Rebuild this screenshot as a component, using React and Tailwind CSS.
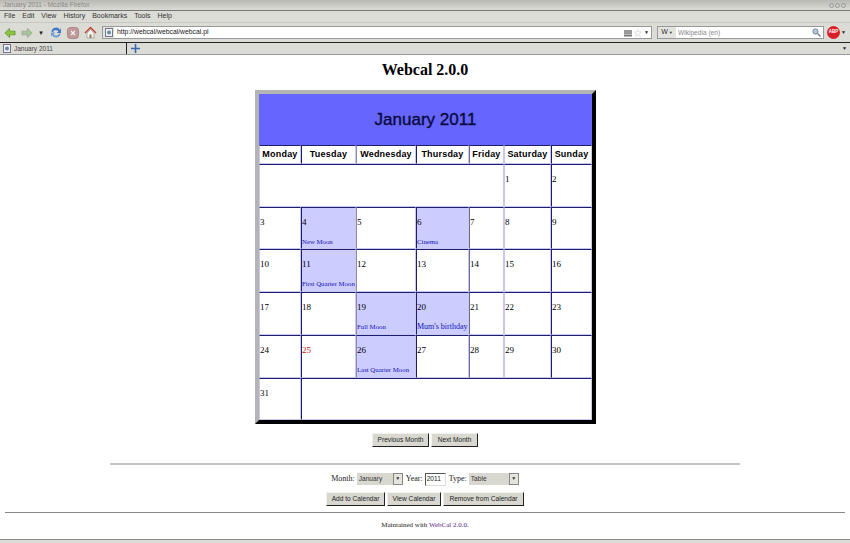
import React from 'react';

const SANS = "font-['Liberation_Sans',Arial,sans-serif]";
const SERIF = "font-['Liberation_Serif','Times_New_Roman',serif]";

const cols = [42, 55, 60, 53, 35, 47, 41];
const dayNames = ['Monday', 'Tuesday', 'Wednesday', 'Thursday', 'Friday', 'Saturday', 'Sunday'];
const rowHeights = ['h-[43px]', 'h-[42px]', 'h-[43px]', 'h-[43px]', 'h-[43px]', 'h-[42px]'];

// the vertical rules are not all the same strength in the screenshot
const leftBorders = [
  'border-l-[#c8c8ee]',
  'border-l-[#1c1c70]',
  'border-l-[#8c8cb8]',
  'border-l-[#1c1c70]',
  'border-l-[#6a6a9c]',
  'border-l-[#c8c8ee]',
  'border-l-[#1c1c70]',
];

const weeks = [
  [{ blank: 5 }, { n: 1 }, { n: 2 }],
  [{ n: 3 }, { n: 4, note: 'New Moon' }, { n: 5 }, { n: 6, note: 'Cinema' }, { n: 7 }, { n: 8 }, { n: 9 }],
  [{ n: 10 }, { n: 11, note: 'First Quarter Moon' }, { n: 12 }, { n: 13 }, { n: 14 }, { n: 15 }, { n: 16 }],
  [{ n: 17 }, { n: 18 }, { n: 19, note: 'Full Moon' }, { n: 20, note: "Mum's birthday", big: true }, { n: 21 }, { n: 22 }, { n: 23 }],
  [{ n: 24 }, { n: 25, red: true }, { n: 26, note: 'Last Quarter Moon' }, { n: 27 }, { n: 28 }, { n: 29 }, { n: 30 }],
  [{ n: 31 }, { blank: 6 }],
];

const cellBorder = 'border border-t-[#1c1c70] border-b-[#c8c8ee] border-r-[#c8c8ee]';

function DayCell({ cell, col }) {
  const left = leftBorders[col];
  if (cell.blank) {
    return <td colSpan={cell.blank} className={`${cellBorder} ${left} p-0`} />;
  }
  return (
    <td className={`${cellBorder} ${left} p-0 align-top ${cell.note ? 'bg-[#ccccff]' : 'bg-white'}`}>
      <div className="flex h-[40px] flex-col overflow-hidden">
        <span className={`mt-[9px] text-[9px] leading-[11px] ${cell.red ? 'text-[#cc1111]' : 'text-black'}`}>{cell.n}</span>
        {cell.note && (
          <span className={`mt-auto whitespace-nowrap pb-[1px] leading-[10px] text-[#1414b4] ${cell.big ? 'text-[8px]' : 'text-[6.8px]'}`}>
            {cell.note}
          </span>
        )}
      </div>
    </td>
  );
}

function PageButton({ children, width }) {
  return (
    <button
      className={`h-[14px] whitespace-nowrap border border-t-[#f0f0ec] border-l-[#f0f0ec] border-b-[#222] border-r-[#222] bg-[#d8d8d0] p-0 text-[6.6px] leading-none text-[#222] ${SANS}`}
      style={{ width }}
    >
      {children}
    </button>
  );
}

function FakeSelect({ value, width }) {
  return (
    <span className={`flex h-[12px] items-center justify-between bg-[#d8d8d0] pl-[2px] text-[6.6px] text-[#333] ${SANS}`} style={{ width }}>
      {value}
      <span className="flex h-[12px] w-[10px] items-center justify-center border border-[#888] bg-[#e4e4dc] text-[5px]">▼</span>
    </span>
  );
}

function MenuItem({ children }) {
  return <span className="text-[7px] text-[#333]">{children}</span>;
}

function PageIcon() {
  return (
    <svg width="8" height="9" viewBox="0 0 8 9">
      <rect x="0.5" y="0.5" width="7" height="8" fill="#eef" stroke="#778" />
      <circle cx="4" cy="4.5" r="2" fill="#6a8a9a" />
    </svg>
  );
}

function Chrome() {
  return (
    <div className={`flex flex-col ${SANS}`}>
      {/* title bar */}
      <div className="flex h-[10px] items-center justify-between bg-gradient-to-b from-[#b8b8b4] to-[#dcdcd6] px-[3px] text-[6.5px] text-[#8a8a86]">
        <span>January 2011 - Mozilla Firefox</span>
        <span className="flex gap-[1px] pr-[1px]">
          <span className="h-[5px] w-[5px] rounded-full border border-[#999]" />
          <span className="h-[5px] w-[5px] rounded-full border border-[#999]" />
          <span className="h-[5px] w-[5px] rounded-full border border-[#999]" />
        </span>
      </div>

      {/* menu bar */}
      <div className="flex h-[12px] items-center gap-[7px] border-t border-[#777] bg-[#dcdcd6] px-[4px]">
        <MenuItem>File</MenuItem>
        <MenuItem>Edit</MenuItem>
        <MenuItem>View</MenuItem>
        <MenuItem>History</MenuItem>
        <MenuItem>Bookmarks</MenuItem>
        <MenuItem>Tools</MenuItem>
        <MenuItem>Help</MenuItem>
      </div>

      {/* nav bar */}
      <div className="flex h-[20px] items-center border-t border-[#c8c8c2] bg-[#dcdcd6] pl-[4px] pr-[1px]">
        <svg width="12" height="12" viewBox="0 0 13 12"><path d="M1 6 L6 1 V4 H12 V8 H6 V11 Z" fill="#8cc63f" stroke="#4c8a1c" strokeWidth="0.7" /></svg>
        <svg className="ml-[5px]" width="12" height="12" viewBox="0 0 13 12"><path d="M12 6 L7 1 V4 H1 V8 H7 V11 Z" fill="#a8c49a" stroke="#8aa080" strokeWidth="0.7" /></svg>
        <span className="ml-[5px] w-[5px] text-[6px] leading-none text-[#222]">▼</span>
        <svg className="ml-[7px]" width="12" height="13" viewBox="0 0 12 13">
          <path d="M1.5 6 A4.5 4.5 0 0 1 10 4 L11 2 V7 H6.5 L8.5 5.5 A3 3 0 0 0 3 6 Z" fill="#3f78c8" />
          <path d="M10.5 7.5 A4.5 4.5 0 0 1 2 9 L1 11 V6.5 H5.5 L3.5 8 A3 3 0 0 0 9 7.5 Z" fill="#6d9bd8" />
        </svg>
        <svg className="ml-[5px]" width="12" height="12" viewBox="0 0 12 12">
          <rect x="0.5" y="0.5" width="11" height="11" rx="3" fill="#c09a9a" stroke="#a88" />
          <path d="M4 4 L8 8 M8 4 L4 8" stroke="#eee" strokeWidth="1.4" />
        </svg>
        <svg className="ml-[5px]" width="13" height="13" viewBox="0 0 13 13">
          <path d="M1 7 L6.5 1.5 L12 7" fill="none" stroke="#c83a2c" strokeWidth="1.4" />
          <path d="M3 7 V12 H10 V7 L6.5 3.5 Z" fill="#f2f2ee" stroke="#888" strokeWidth="0.6" />
          <rect x="5.5" y="8.5" width="2" height="3.5" fill="#9a7a4a" />
        </svg>
        <div className="ml-[5px] flex h-[13px] w-[550px] items-center border border-[#999] bg-white">
          <span className="flex h-full w-[11px] items-center justify-center bg-[#e4e4de]"><PageIcon /></span>
          <span className="ml-[3px] text-[6.8px] text-[#222]">http://webcal/webcal/webcal.pl</span>
          <span className="ml-auto flex items-center gap-[2px] pr-[2px]">
            <svg width="8" height="8" viewBox="0 0 8 8"><rect y="1" width="8" height="4" fill="#999" /><rect y="5.5" width="8" height="2" fill="#777" /></svg>
            <svg width="8" height="8" viewBox="0 0 8 8"><path d="M4 0.5 L5 3 L7.5 3 L5.5 4.8 L6.3 7.5 L4 6 L1.7 7.5 L2.5 4.8 L0.5 3 L3 3 Z" fill="#fff" stroke="#ccc" strokeWidth="0.6" /></svg>
            <span className="text-[5px] text-[#222]">▼</span>
          </span>
        </div>
        <div className="ml-[5px] flex h-[13px] w-[167px] items-center border border-[#999] bg-white">
          <span className="flex h-full w-[18px] items-center justify-center gap-[1px] bg-[#e4e4de] text-[7px] text-[#333]">
            W<span className="text-[4px]">▼</span>
          </span>
          <span className="ml-[2px] text-[6.6px] text-[#888]">Wikipedia (en)</span>
          <svg className="ml-auto mr-[2px]" width="9" height="9" viewBox="0 0 9 9">
            <circle cx="3.5" cy="3.5" r="2.6" fill="#b8c8d8" stroke="#708498" />
            <path d="M5.5 5.5 L8.5 8.5" stroke="#708498" strokeWidth="1.4" />
          </svg>
        </div>
        <span className="ml-[3px] flex h-[13px] w-[13px] items-center justify-center rounded-full bg-[#d8202a] text-[4.5px] font-bold text-white">ABP</span>
        <span className="ml-[1px] text-[5px] text-[#222]">▼</span>
      </div>

      {/* tab bar */}
      <div className="flex h-[12px] items-stretch border-t border-[#222] bg-[#dcdcd6]">
        <div className="flex w-[127px] items-center gap-[3px] border-r border-[#222] pl-[3px] text-[6.5px] text-[#444]">
          <PageIcon />
          January 2011
        </div>
        <div className="flex items-center pl-[4px]">
          <svg width="9" height="9" viewBox="0 0 9 9"><path d="M4.5 0 V9 M0 4.5 H9" stroke="#3868b0" strokeWidth="1.6" /></svg>
        </div>
        <span className="ml-auto flex items-center pr-[3px] text-[5px] text-[#222]">▼</span>
      </div>
      <div className="h-px bg-[#999]" />
    </div>
  );
}

export default function App() {
  return (
    <div className={`flex h-[543px] w-[850px] flex-col overflow-hidden bg-white ${SERIF}`}>
      <Chrome />

      <main className="flex flex-1 flex-col items-center">
        <h1 className="mt-[6px] text-[16px] font-bold leading-[18px] text-black">Webcal 2.0.0</h1>

        {/* calendar */}
        <table className="ml-px mt-[11px] w-[341px] table-fixed border-separate border-[4px] border-t-[#b4b4b4] border-l-[#b4b4b4] border-b-black border-r-black bg-white [border-spacing:0]">
          <colgroup>
            {cols.map((w, i) => <col key={i} style={{ width: w }} />)}
          </colgroup>
          <thead>
            <tr>
              <th colSpan={7} className={`h-[51px] bg-[#6666ff] p-0 text-[17px] font-normal text-[#0a0a40] ${SANS} [-webkit-text-stroke:0.4px_#0a0a40]`}>
                January 2011
              </th>
            </tr>
            <tr>
              {dayNames.map((d, i) => (
                <th key={d} className={`${cellBorder} ${leftBorders[i]} h-[19px] whitespace-nowrap p-0 text-[9px] font-bold tracking-[0.2px] text-black ${SANS}`}>{d}</th>
              ))}
            </tr>
          </thead>
          <tbody>
            {weeks.map((week, i) => {
              let col = 0;
              return (
                <tr key={i} className={rowHeights[i]}>
                  {week.map((cell, j) => {
                    const at = col;
                    col += cell.blank || 1;
                    return <DayCell key={j} cell={cell} col={at} />;
                  })}
                </tr>
              );
            })}
          </tbody>
        </table>

        <div className="mt-[9px] flex gap-[2px]">
          <PageButton width={57}>Previous Month</PageButton>
          <PageButton width={47}>Next Month</PageButton>
        </div>

        <hr className="mt-[16px] h-[2px] w-[630px] border-0 bg-[#c4c4c4]" />

        <div className="mt-[7px] flex h-[14px] items-center text-[8px] text-[#222]">
          <span>Month:</span>
          <span className="ml-[2px]"><FakeSelect value="January" width={46} /></span>
          <span className="ml-[3px]">Year:</span>
          <span className={`ml-[2px] flex h-[13px] w-[21px] items-center border border-t-[#555] border-l-[#555] border-b-[#ddd] border-r-[#ddd] pl-[1px] text-[6.6px] ${SANS}`}>2011</span>
          <span className="ml-[3px]">Type:</span>
          <span className="ml-[2px]"><FakeSelect value="Table" width={50} /></span>
        </div>

        <div className="mt-[6px] flex gap-[2px]">
          <PageButton width={59}>Add to Calendar</PageButton>
          <PageButton width={54}>View Calendar</PageButton>
          <PageButton width={81}>Remove from Calendar</PageButton>
        </div>

        <hr className="mt-[6px] h-px w-[840px] border-0 bg-[#888]" />

        <p className="mt-[8px] text-[7px] leading-[9px] text-[#222]">
          Maintained with <span className="text-[#551a8b]">WebCal 2.0.0.</span>
        </p>

        <div className="mt-auto h-[4px] w-full border-t border-[#888] bg-[#dcdcd6]" />
      </main>
    </div>
  );
}
